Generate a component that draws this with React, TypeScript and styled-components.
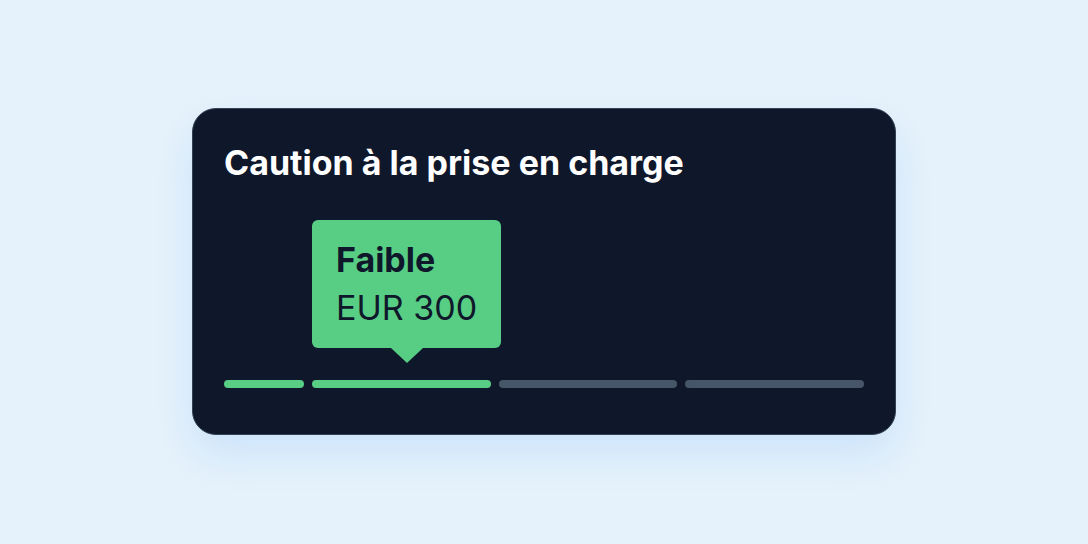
import React from "react";
import styled, { createGlobalStyle } from "styled-components";

const GlobalStyle = createGlobalStyle`
  * {
    box-sizing: border-box;
  }

  html,
  body {
    margin: 0;
    padding: 0;
    background: #e6f2fb;
  }

  body {
    font-family: Inter, "Noto Sans", sans-serif;
  }
`;

const Page = styled.div`
  width: 100vw;
  height: 100vh;
  display: flex;
  align-items: flex-start;
  justify-content: center;
  padding-top: 108px;
`;

const Card = styled.section`
  width: 704px;
  padding: 32px 31px 46px;
  background: #0f172a;
  border: 1px solid #334155;
  border-radius: 24px;
  box-shadow: 0 20px 40px rgba(147, 197, 253, 0.3);
`;

const Title = styled.h2`
  margin: 0;
  font-size: 34px;
  line-height: 44px;
  font-weight: 700;
  color: #ffffff;
`;

const TooltipRow = styled.div<{ offset: number }>`
  display: flex;
  margin-top: 35px;
  padding-left: ${({ offset }) => offset}px;
`;

const Tooltip = styled.div`
  position: relative;
  padding: 16px 24px;
  background: #58cd84;
  border-radius: 6px;
  color: #0f172a;

  &::after {
    content: "";
    position: absolute;
    left: 50%;
    bottom: -15px;
    margin-left: -16px;
    border-left: 16px solid transparent;
    border-right: 16px solid transparent;
    border-top: 15px solid #58cd84;
  }
`;

const Level = styled.div`
  font-size: 34px;
  line-height: 48px;
  font-weight: 700;
`;

const Amount = styled.div`
  font-size: 34px;
  line-height: 48px;
  font-weight: 400;
`;

const Bars = styled.div`
  display: flex;
  gap: 8px;
  margin-top: 32px;
`;

const Bar = styled.div<{ active: boolean; fixed?: number }>`
  height: 8px;
  border-radius: 999px;
  background: ${({ active }) => (active ? "#58cd84" : "#475569")};
  ${({ fixed }) => (fixed ? `width: ${fixed}px; flex: none;` : "flex: 1;")}
`;

const LEVELS = [
  { width: 80, active: true },
  { active: true },
  { active: false },
  { active: false },
];

const App: React.FC = () => {
  return (
    <>
      <GlobalStyle />
      <Page>
        <Card>
          <Title>Caution à la prise en charge</Title>

          <TooltipRow offset={88}>
            <Tooltip>
              <Level>Faible</Level>
              <Amount>EUR 300</Amount>
            </Tooltip>
          </TooltipRow>

          <Bars>
            {LEVELS.map(({ width, active }, index) => (
              <Bar key={index} active={active} fixed={width} />
            ))}
          </Bars>
        </Card>
      </Page>
    </>
  );
};

export default App;
